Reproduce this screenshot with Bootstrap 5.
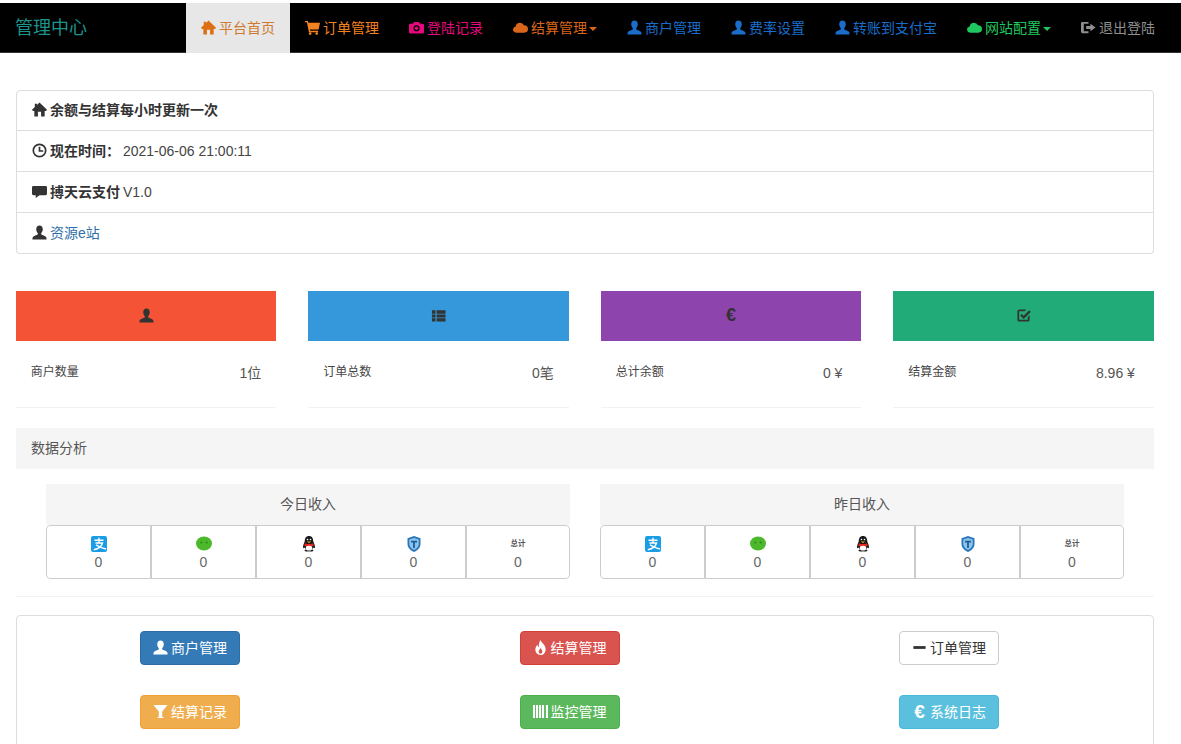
<!DOCTYPE html>
<html lang="zh-CN">
<head>
<meta charset="utf-8">
<title>管理中心</title>
<link rel="stylesheet" href="https://cdn.jsdelivr.net/npm/bootstrap@5.3.0/dist/css/bootstrap.min.css">
<style>
body{font-family:"Liberation Sans","Noto Sans CJK SC",sans-serif;font-size:14px;line-height:20px;color:#333;background:#fff;overflow-x:hidden}
a{text-decoration:none}
.gi{width:15px;height:15px;fill:currentColor;vertical-align:-2px;margin-right:3px;flex:none}
.top-bar{margin-top:3px;height:50px;padding:0;background:#000;align-items:stretch;flex-wrap:nowrap;justify-content:flex-start;border-bottom:1px solid #333}
.top-bar .navbar-brand{width:186px;margin:0;padding:15px;font-size:18px;line-height:20px;color:#1b948c}
.top-bar .navbar-nav{flex-direction:row;height:50px}
.top-bar .navbar-nav .nav-link{padding:15px;line-height:20px;height:50px;white-space:nowrap}
.top-bar .navbar-nav .nav-item.now .nav-link{background:#e7e7e7;color:#cf7a30}
.top-bar .navbar-nav .nav-item.now .gi{color:#dd6f12}
.top-bar .dropdown-toggle::after{margin-left:2px;vertical-align:2px;border-top-width:4px;border-right-width:4px;border-left-width:4px}
.c-orange{color:#f58220!important}.c-pink{color:#e5087f!important}.c-rust{color:#d9661a!important}
.c-blue{color:#1a6dc9!important}.c-green{color:#1fc85e!important}.c-grey{color:#8f8f8f!important}
.page-wrap{width:1170px;padding:37px 16px 0}
.info-list{margin-bottom:37px;border-radius:4px}
.info-list .list-group-item{padding:10px 15px;height:41px;color:#444;border-color:#ddd}
.info-list .list-group-item:first-child{padding-top:9px}
.info-list b{color:#333;margin-right:-1px}
.info-list .gi{color:#333}
.info-list a{color:#2f6fa8}
.stat-row{--bs-gutter-x:32px;margin-left:-16.25px;margin-right:-15.75px}
.stat-head{height:50px;padding-bottom:2px;display:flex;align-items:center;justify-content:center;color:#333}
.stat-head .gi{margin:0}
.stat-head span{font-size:18px;font-weight:700;line-height:1}
.bg-red{background:#f45435}.bg-sky{background:#3498db}.bg-violet{background:#8e44ad}.bg-teal{background:#20ab79}
.stat-body{height:67px;padding:22px 15px 0;display:flex;justify-content:space-between;border-bottom:1px solid #f2f2f2;margin-bottom:20px}
.stat-label{font-size:12px;color:#444;line-height:19px}
.stat-value{color:#555;line-height:20px}
.section-title{height:41px;padding:10px 15px;background:#f5f5f5;color:#555}
.income-row{padding:0 15px;margin:15px 0 0;--bs-gutter-x:30px}
.income-head{height:41px;background:#f5f5f5;color:#555;text-align:center;line-height:41px}
.income-cells{height:54px;display:flex;border-radius:4px;overflow:hidden;border:0}
.income-cell{flex:0 0 105px;border:1px solid #ccc;text-align:center;padding-top:10px;color:#666;line-height:18px}
.income-cell:first-child{border-radius:4px 0 0 4px}
.income-cell:last-child{flex:1 1 auto;border-radius:0 4px 4px 0}
.income-cell svg{display:block;width:16px;height:16px;margin:0 auto 1px}
.tiny-mark{display:block;height:16px;font-size:7.5px;line-height:16px;font-weight:700;color:#555;margin-bottom:1px}
.divider-line{border-bottom:1px solid #f2f2f2;height:18px;margin-bottom:18px}
.action-panel{border:1px solid #ddd;border-radius:4px;padding:15px 0 30px}
.action-grid{margin:0 14.25px 0 -16.75px;--bs-gutter-x:0;row-gap:30px}
.action-btn{padding:6px 12px;font-size:14px;line-height:20px;border-radius:4px;color:#fff;white-space:nowrap}
.act-blue{background:#337ab7;border-color:#2e6da4}
.act-red{background:#d9534f;border-color:#d43f3a}
.act-white{background:#fff;border-color:#ccc;color:#333}
.act-amber{background:#f0ad4e;border-color:#eea236}
.act-lime{background:#5cb85c;border-color:#4cae4c}
.act-cyan{background:#5bc0de;border-color:#46b8da}
.euro-mark{display:inline-block;width:15px;margin-right:3px;font-weight:700;font-size:19px;text-align:center;line-height:1;vertical-align:-1px}
</style>
</head>
<body>
<svg class="d-none" xmlns="http://www.w3.org/2000/svg">
<symbol id="i-home" viewBox="0 0 16 16"><path d="M8 .5 16 8.200 15 9.500H13.500V15.500H9.700V10.500H6.300V15.500H2.500V9.500H1L0 8.200 3 5.300V1.800H5.300V3.100Z"/></symbol>
<symbol id="i-cart" viewBox="0 0 16 16"><path d="M0 1H3L3.600 3H16L14.500 10H5.200L5.500 11.500H14V13H4.200L2 2.500H0Z"/><circle cx="5.500" cy="14.500" r="1.400"/><circle cx="12.500" cy="14.500" r="1.400"/></symbol>
<symbol id="i-cam" viewBox="0 0 16 16"><path fill-rule="evenodd" d="M5.500 2H10.500L12 4H14.500Q16 4 16 5.500V13Q16 14.500 14.500 14.500H1.500Q0 14.500 0 13V5.500Q0 4 1.500 4H4ZM8 5.500A3.300 3.300 0 1 0 8 12.100 3.300 3.300 0 1 0 8 5.500Z"/><circle cx="8" cy="8.800" r="1.800"/></symbol>
<symbol id="i-cloud" viewBox="0 0 16 16"><path d="M4 13.500Q0 13.500 0 10.200 0 7.500 2.800 7 3.500 3 7.500 3 10.500 3 11.700 5.700 16 5.700 16 9.700 16 13.500 12 13.500Z"/></symbol>
<symbol id="i-user" viewBox="0 0 16 16"><path d="M8 .5C10.200.5 11.500 2.300 11.500 4.600 11.500 6.500 10.600 8 9.800 8.900 9.500 9.800 10 10.300 11 10.700 13 11.500 15.500 12 15.500 14.200V15.500H.5V14.200C.5 12 3 11.500 5 10.700 6 10.300 6.500 9.800 6.200 8.900 5.400 8 4.500 6.500 4.500 4.600 4.500 2.300 5.800.5 8 .5Z"/></symbol>
<symbol id="i-out" viewBox="0 0 16 16"><path d="M1.500 2H8V4H3V12H8V14H1.500Q0 14 0 12.500V3.500Q0 2 1.500 2ZM10 4 15.500 8 10 12V9.600H5.500V6.400H10Z"/></symbol>
<symbol id="i-clock" viewBox="0 0 16 16"><path fill-rule="evenodd" d="M8 .5A7.500 7.500 0 1 1 8 15.500 7.500 7.500 0 1 1 8 .5ZM8 2.300A5.700 5.700 0 1 0 8 13.700 5.700 5.700 0 1 0 8 2.300ZM7.100 4H8.900V7.600H12V9.300H7.100Z"/></symbol>
<symbol id="i-chat" viewBox="0 0 16 16"><path d="M1.500 2H14.500Q16 2 16 3.500V10.500Q16 12 14.500 12H8L4 15V12H1.500Q0 12 0 10.500V3.500Q0 2 1.500 2Z"/></symbol>
<symbol id="i-list" viewBox="0 0 16 16"><path d="M1 2.500H4.800V6H1ZM6 2.500H15.500V6H6ZM1 7H4.800V10H1ZM6 7H15.500V10H6ZM1 11H4.800V14.500H1ZM6 11H15.500V14.500H6Z"/></symbol>
<symbol id="i-check" viewBox="0 0 16 16"><path d="M2.500 1.500H11L9.200 3.400H3.400V12.600H12.600V9.500L14.500 7.600V12.500Q14.500 14.500 12.500 14.500H3.500Q1.500 14.500 1.500 12.500V3.500Q1.500 1.500 3.500 1.500ZM14 2.500 15.700 4.200 8.200 11.700 4.500 8 6.200 6.300 8.200 8.300Z"/></symbol>
<symbol id="i-fire" viewBox="0 0 16 16"><path fill-rule="evenodd" d="M8 0C9 3 13.500 5 13.500 10 13.500 13.500 11 16 8 16 5 16 2.500 13.500 2.500 10.200 2.500 7.800 3.800 6 5 5 5 6.500 5.500 7.500 6.300 7.800 6 5 6.500 2.500 8 0ZM8.200 8C8 10 6 10.500 6 12.500 6 13.800 7 14.600 8 14.600 9 14.600 10 13.800 10 12.500 10 10.800 8.700 9.800 8.200 8Z"/></symbol>
<symbol id="i-minus" viewBox="0 0 16 16"><path d="M1.500 6.500H14.500V9.500H1.500Z"/></symbol>
<symbol id="i-filter" viewBox="0 0 16 16"><path d="M.5 1H15.500L9.800 8V13.500L12 15H4L6.200 13.500V8Z"/></symbol>
<symbol id="i-bars" viewBox="0 0 16 16"><path d="M0 1H2.200V15H0ZM3.200 1H5.400V15H3.200ZM6.400 1H8.600V15H6.400ZM9.600 1H11.800V15H9.600ZM13.800 1H16V15H13.800Z"/></symbol>
<symbol id="p-ali" viewBox="0 0 16 16"><rect width="16" height="16" rx="2" fill="#1b9de6"/><path d="M3.500 4.200H12.500M8 1.800V7M4.500 7H11.500C10.800 9.800 8.500 12.500 2.800 13.800M5 8.800C7.500 10.800 10.500 12 15 13" stroke="#fff" stroke-width="1.400" fill="none"/></symbol>
<symbol id="p-wx" viewBox="0 0 16 16"><ellipse cx="8" cy="7.500" rx="8" ry="7" fill="#4cb82c"/><circle cx="5.300" cy="6.500" r="1.100" fill="#2f8a1a"/><circle cx="10.700" cy="6.500" r="1.100" fill="#2f8a1a"/></symbol>
<symbol id="p-qq" viewBox="0 0 16 16"><path d="M8 0C5 0 3.800 2.300 3.800 5 3.800 6 2 8.500 2 11 2 12.500 3 12.500 3.800 11.500 4 12.700 4.500 13.500 5 14H3.500C3.500 15.500 6 16 8 15.200 10 16 12.500 15.500 12.500 14H11C11.500 13.500 12 12.700 12.200 11.500 13 12.500 14 12.500 14 11 14 8.500 12.200 6 12.200 5 12.200 2.300 11 0 8 0Z" fill="#1a1a1a"/><path d="M4 7.200C6.500 8.400 9.500 8.400 12 7.200L12.800 9.800C10 11 6 11 3.200 9.800Z" fill="#e8261c"/><ellipse cx="8" cy="12.200" rx="3.300" ry="2.400" fill="#fff"/><path d="M5.800 5.600H10.200L8 7Z" fill="#f5b21a"/><circle cx="6.500" cy="3.500" r=".8" fill="#fff"/><circle cx="9.500" cy="3.500" r=".8" fill="#fff"/></symbol>
<symbol id="p-shield" viewBox="0 0 16 16"><path d="M8 0 14.500 2.200V8C14.500 12 11 14.800 8 16 5 14.800 1.500 12 1.500 8V2.200Z" fill="#2a76b8"/><path d="M8 2 12.700 3.500V8C12.700 10.800 10 13 8 14 6 13 3.300 10.800 3.300 8V3.500Z" fill="#8cc4ec"/><path d="M5 4.800H11V6.400H8.900V12H7.100V6.400H5Z" fill="#1a5d99"/></symbol>
</svg>

<nav class="navbar navbar-expand top-bar">
  <a class="navbar-brand" href="#">管理中心</a>
  <ul class="navbar-nav">
    <li class="nav-item now"><a class="nav-link" href="#"><svg class="gi"><use href="#i-home"/></svg>平台首页</a></li>
    <li class="nav-item"><a class="nav-link c-orange" href="#"><svg class="gi"><use href="#i-cart"/></svg>订单管理</a></li>
    <li class="nav-item"><a class="nav-link c-pink" href="#"><svg class="gi"><use href="#i-cam"/></svg>登陆记录</a></li>
    <li class="nav-item dropdown"><a class="nav-link dropdown-toggle c-rust" href="#"><svg class="gi"><use href="#i-cloud"/></svg>结算管理</a></li>
    <li class="nav-item"><a class="nav-link c-blue" href="#"><svg class="gi"><use href="#i-user"/></svg>商户管理</a></li>
    <li class="nav-item"><a class="nav-link c-blue" href="#"><svg class="gi"><use href="#i-user"/></svg>费率设置</a></li>
    <li class="nav-item"><a class="nav-link c-blue" href="#"><svg class="gi"><use href="#i-user"/></svg>转账到支付宝</a></li>
    <li class="nav-item dropdown"><a class="nav-link dropdown-toggle c-green" href="#"><svg class="gi"><use href="#i-cloud"/></svg>网站配置</a></li>
    <li class="nav-item"><a class="nav-link c-grey" href="#"><svg class="gi"><use href="#i-out"/></svg>退出登陆</a></li>
  </ul>
</nav>

<main class="page-wrap">
  <ul class="list-group info-list">
    <li class="list-group-item"><svg class="gi"><use href="#i-home"/></svg><b>余额与结算每小时更新一次</b></li>
    <li class="list-group-item"><svg class="gi"><use href="#i-clock"/></svg><b>现在时间：</b> 2021-06-06 21:00:11</li>
    <li class="list-group-item"><svg class="gi"><use href="#i-chat"/></svg><b>搏天云支付</b> V1.0</li>
    <li class="list-group-item"><svg class="gi"><use href="#i-user"/></svg><a href="#">资源e站</a></li>
  </ul>

  <div class="row stat-row">
    <div class="col-3">
      <div class="stat-head bg-red"><svg class="gi"><use href="#i-user"/></svg></div>
      <div class="stat-body"><span class="stat-label">商户数量</span><span class="stat-value">1位</span></div>
    </div>
    <div class="col-3">
      <div class="stat-head bg-sky"><svg class="gi"><use href="#i-list"/></svg></div>
      <div class="stat-body"><span class="stat-label">订单总数</span><span class="stat-value">0笔</span></div>
    </div>
    <div class="col-3">
      <div class="stat-head bg-violet"><span>€</span></div>
      <div class="stat-body"><span class="stat-label">总计余额</span><span class="stat-value">0 ¥&nbsp;</span></div>
    </div>
    <div class="col-3">
      <div class="stat-head bg-teal"><svg class="gi"><use href="#i-check"/></svg></div>
      <div class="stat-body"><span class="stat-label">结算金额</span><span class="stat-value">8.96 ¥&nbsp;</span></div>
    </div>
  </div>

  <div class="section-title">数据分析</div>
  <div class="row income-row">
    <div class="col-6">
      <div class="income-head">今日收入</div>
      <div class="income-cells">
        <div class="income-cell"><svg><use href="#p-ali"/></svg>0</div>
        <div class="income-cell"><svg><use href="#p-wx"/></svg>0</div>
        <div class="income-cell"><svg><use href="#p-qq"/></svg>0</div>
        <div class="income-cell"><svg><use href="#p-shield"/></svg>0</div>
        <div class="income-cell"><span class="tiny-mark">总计</span>0</div>
      </div>
    </div>
    <div class="col-6">
      <div class="income-head">昨日收入</div>
      <div class="income-cells">
        <div class="income-cell"><svg><use href="#p-ali"/></svg>0</div>
        <div class="income-cell"><svg><use href="#p-wx"/></svg>0</div>
        <div class="income-cell"><svg><use href="#p-qq"/></svg>0</div>
        <div class="income-cell"><svg><use href="#p-shield"/></svg>0</div>
        <div class="income-cell"><span class="tiny-mark">总计</span>0</div>
      </div>
    </div>
  </div>
  <div class="divider-line"></div>

  <div class="action-panel">
    <div class="row action-grid">
      <div class="col-4 text-center"><a class="btn action-btn act-blue" href="#"><svg class="gi"><use href="#i-user"/></svg>商户管理</a></div>
      <div class="col-4 text-center"><a class="btn action-btn act-red" href="#"><svg class="gi"><use href="#i-fire"/></svg>结算管理</a></div>
      <div class="col-4 text-center"><a class="btn action-btn act-white" href="#"><svg class="gi"><use href="#i-minus"/></svg>订单管理</a></div>
      <div class="col-4 text-center"><a class="btn action-btn act-amber" href="#"><svg class="gi"><use href="#i-filter"/></svg>结算记录</a></div>
      <div class="col-4 text-center"><a class="btn action-btn act-lime" href="#"><svg class="gi"><use href="#i-bars"/></svg>监控管理</a></div>
      <div class="col-4 text-center"><a class="btn action-btn act-cyan" href="#"><span class="euro-mark">€</span>系统日志</a></div>
    </div>
  </div>
</main>
<script src="https://cdn.jsdelivr.net/npm/bootstrap@5.3.0/dist/js/bootstrap.bundle.min.js"></script>
</body>
</html>
